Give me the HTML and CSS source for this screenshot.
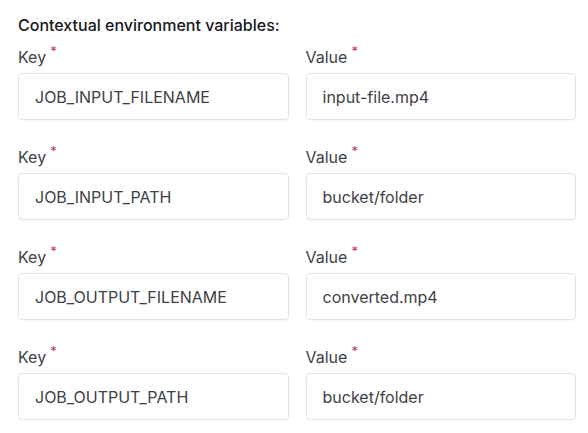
FILE: index.html
```html
<!DOCTYPE html>
<html>
<head>
<meta charset="utf-8">
<link rel="stylesheet" href="styles.css">
</head>
<body>
<div class="wrap">
  <div class="title">Contextual environment variables:</div>
  <div class="rows">
    <div class="row">
      <div class="field"><label class="label">Key<span class="req">*</span></label><div class="input">JOB_INPUT_FILENAME</div></div>
      <div class="field"><label class="label">Value<span class="req">*</span></label><div class="input">input-file.mp4</div></div>
    </div>
    <div class="row">
      <div class="field"><label class="label">Key<span class="req">*</span></label><div class="input">JOB_INPUT_PATH</div></div>
      <div class="field"><label class="label">Value<span class="req">*</span></label><div class="input">bucket/folder</div></div>
    </div>
    <div class="row">
      <div class="field"><label class="label">Key<span class="req">*</span></label><div class="input">JOB_OUTPUT_FILENAME</div></div>
      <div class="field"><label class="label">Value<span class="req">*</span></label><div class="input">converted.mp4</div></div>
    </div>
    <div class="row">
      <div class="field"><label class="label">Key<span class="req">*</span></label><div class="input">JOB_OUTPUT_PATH</div></div>
      <div class="field"><label class="label">Value<span class="req">*</span></label><div class="input">bucket/folder</div></div>
    </div>
  </div>
</div>
</body>
</html>
```
FILE: styles.css
```css
html, body {
  margin: 0;
  padding: 0;
  background: #ffffff;
}
body {
  font-family: Inter, "Noto Sans", sans-serif;
  color: #3f3f46;
}
.wrap {
  padding: 14px 12px 0 18px;
}
.title {
  font-size: 16px;
  line-height: 22px;
  font-weight: 500;
  color: #18181b;
  margin-bottom: 10px;
}
.rows {
  display: flex;
  flex-direction: column;
  gap: 26px;
}
.row {
  display: grid;
  grid-template-columns: 1fr 1fr;
  column-gap: 17px;
}
.field {
  display: flex;
  flex-direction: column;
  gap: 4px;
}
.label {
  font-size: 16px;
  line-height: 22px;
  color: #3f3f46;
}
.req {
  color: #b83a5c;
  font-size: 13px;
  position: relative;
  top: -7px;
  margin-left: 4px;
}
.input {
  height: 47px;
  box-sizing: border-box;
  border: 1px solid #e4e4e7;
  border-radius: 4px;
  padding: 0 16px;
  display: flex;
  align-items: center;
  font-size: 16px;
  color: #3f3f46;
  box-shadow: 0 1px 2px rgba(0,0,0,0.04);
}
```
